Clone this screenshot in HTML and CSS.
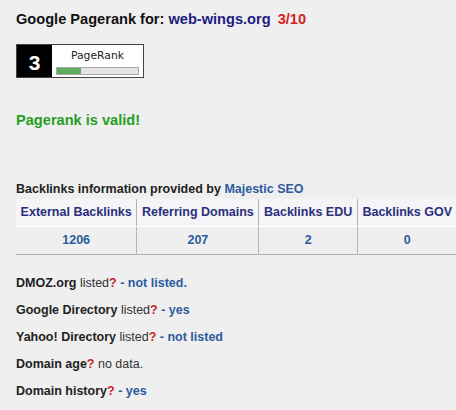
FILE: index.html
```html
<!DOCTYPE html>
<html lang="en">
<head>
  <meta charset="UTF-8" />
  <title>Google Pagerank</title>
  <link rel="stylesheet" href="styles.css">
</head>
<body>
  <h1 class="titulo">Google Pagerank for: <span class="dominio">web-wings.org</span> <span class="nota">3/10</span></h1>

  <!-- selo do pagerank -->
  <div class="selo">
    <div class="selo-num">3</div>
    <div class="selo-info">
      <span class="selo-label">PageRank</span>
      <div class="barra"><div class="barra-fill" style="width: 30%"></div></div>
    </div>
  </div>

  <p class="valido">Pagerank is valid!</p>

  <p class="info">Backlinks information provided by <span class="azul">Majestic SEO</span></p>
  <table class="backlinks">
    <tr>
      <th>External Backlinks</th>
      <th>Referring Domains</th>
      <th>Backlinks EDU</th>
      <th>Backlinks GOV</th>
    </tr>
    <tr>
      <td>1206</td>
      <td>207</td>
      <td>2</td>
      <td>0</td>
    </tr>
  </table>

  <div class="listas">
    <p><b>DMOZ.org</b> listed<span class="q">?</span> <span class="azul">- not listed.</span></p>
    <p><b>Google Directory</b> listed<span class="q">?</span> <span class="azul">- yes</span></p>
    <p><b>Yahoo! Directory</b> listed<span class="q">?</span> <span class="azul">- not listed</span></p>
    <p><b>Domain age</b><span class="q">?</span> no data.</p>
    <p><b>Domain history</b><span class="q">?</span> <span class="azul">- yes</span></p>
  </div>
</body>
</html>
```

FILE: styles.css
```css
* {
  margin: 0;
  padding: 0;
  box-sizing: border-box;
}
html {
  overflow: hidden;
}
body {
  font-family: "Liberation Sans", Arial, sans-serif;
  background: #efefef;
  color: #222;
  padding: 10px 16px;
}
.titulo {
  font-size: 14.6px;
  line-height: 18px;
  font-weight: bold;
  color: #111;
}
.dominio {
  color: #1c1c80;
}
.nota {
  color: #d42222;
  margin-left: 3px;
}

/* selo */
.selo {
  display: flex;
  width: 128px;
  height: 34px;
  margin-top: 16px;
  border: 1px solid #444;
  background: #fff;
}
.selo-num {
  width: 35px;
  background: #000;
  color: #fff;
  font-weight: bold;
  font-size: 21px;
  display: flex;
  align-items: center;
  justify-content: center;
  padding-top: 4px;
}
.selo-info {
  flex: 1;
  display: flex;
  flex-direction: column;
  align-items: center;
  padding-top: 4px;
}
.selo-label {
  font-family: "DejaVu Sans", Verdana, sans-serif;
  font-size: 10.8px;
  line-height: 13px;
  color: #222;
}
.barra {
  width: 83px;
  height: 8px;
  margin-top: 5px;
  background: #e4e4e4;
  border: 1px solid #aaa;
}
.barra-fill {
  height: 100%;
  background: #5cae5c;
}

.valido {
  margin-top: 33px;
  font-size: 14.6px;
  line-height: 18px;
  font-weight: bold;
  color: #23a023;
}
.info {
  margin-top: 53px;
  font-size: 12.5px;
  line-height: 15px;
  font-weight: bold;
  color: #222;
}
.azul {
  color: #2d5b9e;
  font-weight: bold;
}

/* tabela */
.backlinks {
  border-collapse: collapse;
  margin-top: 2px;
  font-size: 12.5px;
  font-weight: bold;
}
.backlinks th,
.backlinks td {
  padding: 0 4.6px;
  text-align: center;
  white-space: nowrap;
  border-left: 1px solid #b4b4b4;
}
.backlinks th:first-child,
.backlinks td:first-child {
  border-left: none;
}
.backlinks th {
  height: 27px;
  background: #f5f5f7;
  color: #2b2f7c;
  border-bottom: 1px solid #fff;
}
.backlinks td {
  height: 28px;
  color: #2d5b9e;
  border-bottom: 1px solid #b4b4b4;
}

.listas {
  margin-top: 21px;
}
.listas p {
  font-size: 12.5px;
  line-height: 15px;
  color: #333;
  margin-bottom: 12px;
}
.listas b {
  color: #222;
}
.q {
  color: #cc2222;
  font-weight: bold;
}
```
